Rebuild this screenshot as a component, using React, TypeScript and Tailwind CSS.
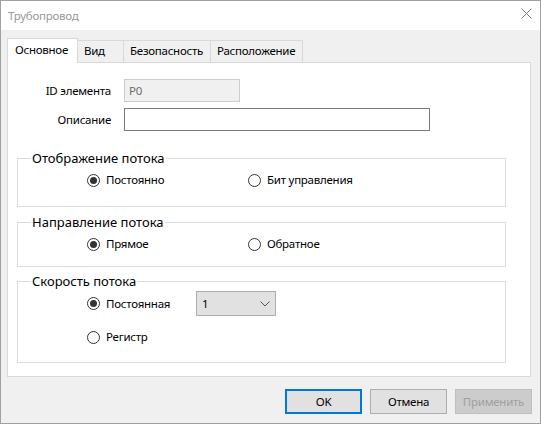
import React from 'react';

const tabs = [
    { label: 'Основное', active: true, width: 'w-[71px]' },
    { label: 'Вид', active: false, width: 'w-[47px]' },
    { label: 'Безопасность', active: false, width: 'w-[88px]' },
    { label: 'Расположение', active: false, width: 'w-[93px]' },
];

function Radio({ checked, label }: { checked?: boolean; label: string }) {
    return (
        <div className="flex items-center h-[16px]">
            <span className="w-[13px] h-[13px] rounded-full border border-[#333333] bg-white flex items-center justify-center">
                {checked && <span className="w-[7px] h-[7px] rounded-full bg-[#333333]" />}
            </span>
            <span className="ml-[6px] text-black">{label}</span>
        </div>
    );
}

function Group({ title, className, children }: { title: string; className: string; children: React.ReactNode }) {
    return (
        <div className={`relative ml-[9px] w-[489px] border border-[#dcdcdc] ${className}`}>
            <span className="absolute -top-[10px] left-[13px] bg-white px-[1px] text-[13px] tracking-normal leading-[18px] text-black">
                {title}
            </span>
            {children}
        </div>
    );
}

function Button({ label, primary, disabled }: { label: string; primary?: boolean; disabled?: boolean }) {
    let cls = 'bg-[#e1e1e1] border border-[#adadad] text-black';
    if (primary) cls = 'bg-[#e1e1e1] border-2 border-[#0078d7] text-black';
    if (disabled) cls = 'bg-[#cccccc] border border-[#bfbfbf] text-[#a0a0a0]';
    return (
        <button type="button" className={`w-[77px] h-[25px] flex items-center justify-center ${cls}`}>
            {label}
        </button>
    );
}

export default function App() {
    return (
        <div className="w-[541px] h-[424px] flex flex-col border border-[#a0a0a0] bg-[#f0f0f0] font-['Noto_Sans',sans-serif] text-[11.5px] tracking-[-0.25px] leading-[16px] select-none">
            {/* title bar */}
            <div className="h-[29px] bg-white flex items-center justify-between pl-[7px] pr-[8px]">
                <span className="text-[#999999]">Трубопровод</span>
                <svg width="11" height="11" viewBox="0 0 11 11" className="-mt-[4px]">
                    <path d="M0.5 0.5 L10.5 10.5 M10.5 0.5 L0.5 10.5" stroke="#777777" strokeWidth="1" fill="none" />
                </svg>
            </div>

            <div className="flex-1 flex flex-col pt-[8px]">
                {/* tab strip */}
                <div className="relative z-10 flex items-end h-[25px] -mb-px ml-[6px]">
                    {tabs.map(tab =>
                        tab.active ? (
                            <div
                                key={tab.label}
                                className={`${tab.width} h-[25px] bg-white border-x border-t border-[#d9d9d9] pl-[7px] pt-[3px] text-black`}
                            >
                                {tab.label}
                            </div>
                        ) : (
                            <div
                                key={tab.label}
                                className={`${tab.width} h-[23px] -ml-px bg-[#f0f0f0] border border-[#d9d9d9] pl-[6px] pt-[2px] text-black`}
                            >
                                {tab.label}
                            </div>
                        )
                    )}
                </div>

                {/* tab page */}
                <div className="ml-[6px] w-[524px] h-[315px] bg-white border border-[#d9d9d9] pt-[16px]">
                    <div className="flex items-center">
                        <span className="w-[103px] text-right text-black">ID элемента</span>
                        <div className="ml-[13px] w-[116px] h-[23px] border border-[#cccccc] bg-[#f0f0f0] px-[4px] flex items-center text-[#6d6d6d]">
                            P0
                        </div>
                    </div>
                    <div className="flex items-center mt-[6px]">
                        <span className="w-[103px] text-right text-black">Описание</span>
                        <input
                            type="text"
                            className="ml-[13px] w-[306px] h-[23px] border border-[#7a7a7a] bg-white px-[3px] outline-none"
                        />
                    </div>

                    <Group title="Отображение потока" className="mt-[27px] h-[49px] pt-[13px]">
                        <div className="flex pl-[69px]">
                            <div className="w-[161px]">
                                <Radio checked label="Постоянно" />
                            </div>
                            <Radio label="Бит управления" />
                        </div>
                    </Group>

                    <Group title="Направление потока" className="mt-[15px] h-[45px] pt-[13px]">
                        <div className="flex pl-[69px]">
                            <div className="w-[161px]">
                                <Radio checked label="Прямое" />
                            </div>
                            <Radio label="Обратное" />
                        </div>
                    </Group>

                    <Group title="Скорость потока" className="mt-[14px] h-[82px] pt-[9px]">
                        <div className="flex items-center pl-[69px]">
                            <div className="w-[109px]">
                                <Radio checked label="Постоянная" />
                            </div>
                            <div className="w-[80px] h-[25px] bg-[#e1e1e1] border border-[#adadad] flex items-center justify-between pl-[5px] pr-[5px]">
                                <span className="text-black">1</span>
                                <svg width="10" height="6" viewBox="0 0 10 6">
                                    <path d="M0.5 0.5 L5 5 L9.5 0.5" stroke="#555555" strokeWidth="1" fill="none" />
                                </svg>
                            </div>
                        </div>
                        <div className="pl-[69px] mt-[13px]">
                            <Radio label="Регистр" />
                        </div>
                    </Group>
                </div>

                {/* dialog buttons */}
                <div className="flex justify-end gap-[8px] pr-[8px] mt-[12px]">
                    <Button label="OK" primary />
                    <Button label="Отмена" />
                    <Button label="Применить" disabled />
                </div>
            </div>
        </div>
    );
}
